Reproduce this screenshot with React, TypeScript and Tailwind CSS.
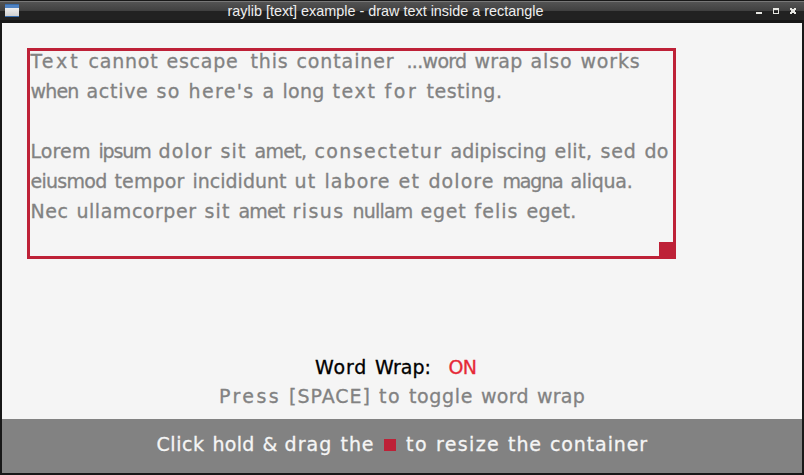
import { useLayoutEffect, useRef, useState } from "react";

// Glyph widths (in font cells) for ASCII 32..126.
const GLYPHS = [
  3, 1, 4, 6, 5, 7, 6, 2, 3, 3, 5, 5, 2, 4, 1, 7, 5, 2, 5, 5, 5, 5, 5, 5, 5, 5, 1, 1, 3, 4, 3, 6, 7, 6, 6, 6, 6, 6,
  6, 6, 6, 3, 5, 6, 5, 7, 6, 6, 6, 6, 6, 6, 7, 6, 7, 7, 6, 6, 6, 2, 7, 2, 3, 5, 2, 5, 5, 5, 5, 5, 4, 5, 5, 1, 2, 5,
  2, 5, 5, 5, 5, 5, 5, 5, 4, 5, 5, 5, 5, 5, 5, 3, 1, 3, 4,
];

const advance = (text: string) =>
  [...text].reduce((sum, c) => sum + (c === "\t" ? 12 : GLYPHS[c.charCodeAt(0) - 32] * 2 + 2), 0);

// A word whose tracking is tuned so that it fills its cell advance.
function Word({ text }: { text: string }) {
  const ref = useRef<HTMLSpanElement>(null);
  const [tracking, setTracking] = useState(0);
  const width = advance(text);
  useLayoutEffect(() => {
    const el = ref.current;
    if (!el) return;
    el.style.letterSpacing = "0px";
    const natural = el.getBoundingClientRect().width;
    const next = (width - natural) / text.length;
    el.style.letterSpacing = `${next}px`;
    setTracking(next);
  }, [text, width]);
  return (
    <span className="inline-block" style={{ width }}>
      <span ref={ref} style={{ letterSpacing: tracking }}>
        {text}
      </span>
    </span>
  );
}

function Line({ text, className = "" }: { text: string; className?: string }) {
  const parts = text.split(/([ \t]+)/).filter(Boolean);
  return (
    <p
      className={`h-[30px] whitespace-pre font-['DejaVu_Sans',sans-serif] text-[19px] leading-[30px] [-webkit-text-stroke:0.3px_currentColor] ${className}`}
    >
      {parts.map((part, i) =>
        part.trim() ? (
          <Word key={i} text={part} />
        ) : (
          <span key={i} className="inline-block" style={{ width: advance(part) }}>
            {" "}
          </span>
        ),
      )}
    </p>
  );
}

const BODY = [
  "Text cannot escape\tthis container\t...word wrap also works",
  "when active so here's a long text for testing.",
  "",
  "Lorem ipsum dolor sit amet, consectetur adipiscing elit, sed do",
  "eiusmod tempor incididunt ut labore et dolore magna aliqua.",
  "Nec ullamcorper sit amet risus nullam eget felis eget.",
];

function TitleBar() {
  return (
    <header className="flex h-[23px] items-start border-t border-[#181818] bg-[linear-gradient(to_bottom,#777_0px,#777_1px,#535353_1px,#404040_10px,#222_10px,#222_19px,#161616_19px,#161616_22px)] pr-[7px] pl-[5px]">
      <svg className="mt-[3px] h-[13px] w-[14px]" viewBox="0 0 14 13" shapeRendering="crispEdges">
        <defs>
          <linearGradient id="pane" x1="0" y1="0" x2="0" y2="1">
            <stop offset="0" stopColor="#efefef" />
            <stop offset="1" stopColor="#d0d0d0" />
          </linearGradient>
        </defs>
        <rect width="14" height="13" fill="#386dad" />
        <rect y="1" width="14" height="3" fill="#5083c3" />
        <rect y="4" width="14" height="8" fill="url(#pane)" />
      </svg>
      <h1 className="mt-px flex-1 pl-[208.5px] whitespace-nowrap font-['Liberation_Sans',sans-serif] text-[14.4px] leading-[18px] text-[#eee]">
        raylib [text] example - draw text inside a rectangle
      </h1>
      <svg className="mt-[7px] h-[6px] w-[41px]" viewBox="0 0 41 6" shapeRendering="crispEdges" fill="#e6e6e2">
        <path d="M0 4h6v2H0z" />
        <path fillRule="evenodd" d="M17 0h6v6h-6zM18 2v3h4V2z" />
        <path d="M34 0h2v1h2V0h2v2h-1v2h1v2h-2V5h-2v1h-2V4h1V2h-1z" />
      </svg>
    </header>
  );
}

export default function App() {
  return (
    <div className="flex h-[475px] w-[804px] flex-col overflow-hidden bg-[#181818]">
      <TitleBar />
      <main className="mx-[2px] flex h-[450px] flex-col bg-[#f5f5f5]">
        <section className="relative mt-[25px] ml-[25px] h-[211px] w-[649px] border-[3px] border-[#be2137]">
          <div className="-mt-[5px] pl-[0.5px] text-[#828282]">
            {BODY.map((line, i) => (
              <Line key={i} text={line} />
            ))}
          </div>
          <div className="absolute -right-[3px] -bottom-[3px] size-[17px] bg-[#be2137]" />
        </section>
        <div className="mt-[93px] flex h-[29px] pl-[313px]">
          <Line text="Word Wrap:" className="w-[133.5px] text-black" />
          <Line text="ON" className="text-[#e62937]" />
        </div>
        <Line text="Press [SPACE] to toggle word wrap" className="pl-[217px] text-[#828282]" />
        <footer className="mt-auto flex h-[54px] bg-[#828282] pt-[10px] pl-[154.5px] text-[#f5f5f5]">
          <Line text="Click hold & drag the" className="w-[227.5px]" />
          <div className="mt-[10px] mr-[10px] size-3 bg-[#be2137]" />
          <Line text="to resize the container" />
        </footer>
      </main>
    </div>
  );
}
